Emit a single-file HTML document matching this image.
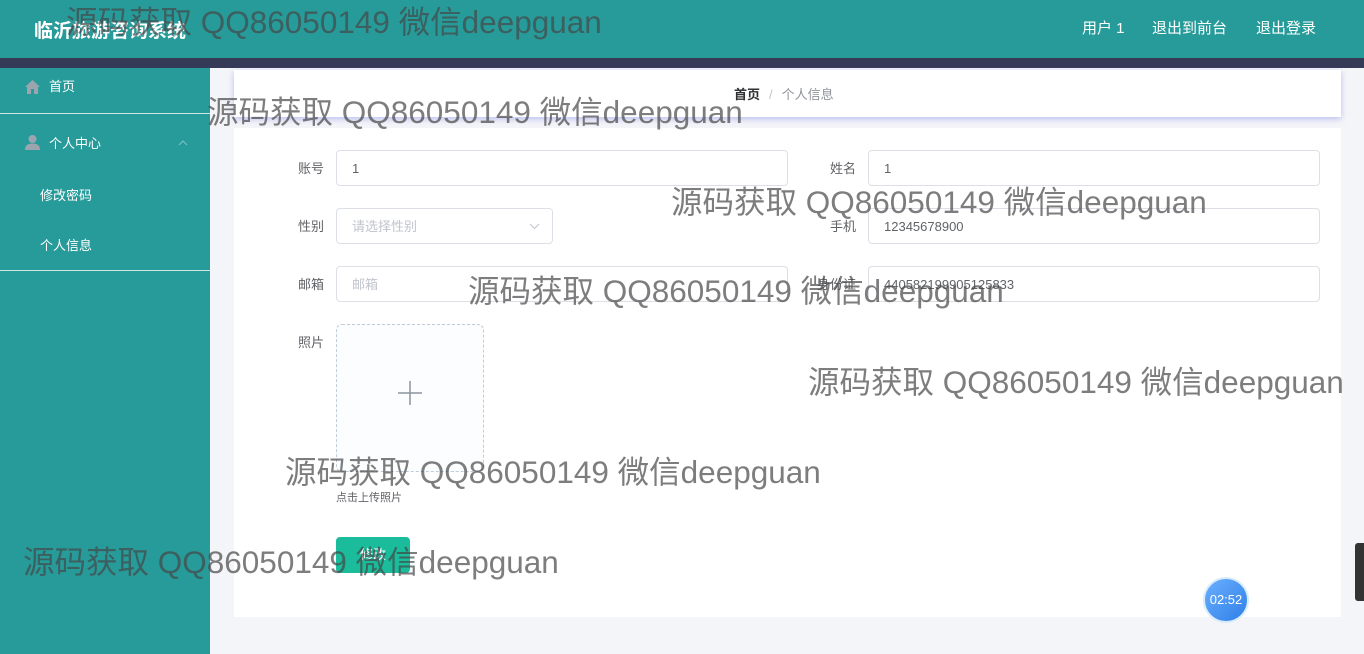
<!DOCTYPE html>
<html><head><meta charset="utf-8"><style>
*{margin:0;padding:0;box-sizing:border-box}
body{width:1364px;height:654px;overflow:hidden;background:#f4f5f8;font-family:"Liberation Sans","Microsoft YaHei","Noto Sans CJK SC",sans-serif;position:relative;font-size:13px;color:#606266}
.hdr{position:absolute;left:0;top:0;width:1364px;height:58px;background:#279b9a}
.strip{position:absolute;left:0;top:58px;width:1364px;height:10px;background:#353a57}
.logo{position:absolute;left:34px;top:16px;color:#fff;font-size:19px;font-weight:bold}
.nav{position:absolute;top:17px;color:#fff;font-size:15px}
.side{position:absolute;left:0;top:68px;width:210px;height:586px;background:#279b9a;color:#fff}
.side .it{position:absolute;font-size:13px}
.line{position:absolute;left:0;width:210px;height:1px;background:#cfe6e6}
.bc{position:absolute;left:234px;top:70px;width:1107px;height:47px;background:#fff;box-shadow:0 2px 6px rgba(80,90,230,.35)}
.card{position:absolute;left:234px;top:128px;width:1107px;height:489px;background:#fff}
.lbl{position:absolute;font-size:13px;color:#606266;text-align:right;width:60px}
.inp{position:absolute;height:36px;border:1px solid #dcdfe6;border-radius:4px;background:#fff;padding-left:15px;line-height:35px;font-size:13px;color:#606266}
.ph{color:#c0c4cc}
.wm{position:absolute;font-size:31.5px;color:rgba(70,70,70,.7);white-space:nowrap;line-height:34px;font-family:"Liberation Sans","Noto Sans CJK SC",sans-serif}
</style></head><body>
<div class="hdr"></div><div class="strip"></div>
<div class="logo">临沂旅游咨询系统</div>
<div class="nav" style="left:1082px">用户 1</div>
<div class="nav" style="left:1152px">退出到前台</div>
<div class="nav" style="left:1256px">退出登录</div>
<div class="side">
 <svg style="position:absolute;left:25px;top:12px" width="15" height="14" viewBox="0 0 15 14"><path d="M7.5 0L0 7h2v7h4V9h3v5h4V7h2z" fill="#9aa5b0"/></svg>
 <div class="it" style="left:49px;top:8px">首页</div>
 <div class="line" style="top:45px"></div>
 <svg style="position:absolute;left:25px;top:67px" width="15" height="15" viewBox="0 0 15 15"><circle cx="7.5" cy="4" r="4" fill="#9aa5b0"/><path d="M0 15c0-5 3-6.5 7.5-6.5S15 10 15 15z" fill="#9aa5b0"/></svg>
 <div class="it" style="left:49px;top:65px">个人中心</div>
 <svg style="position:absolute;left:178px;top:72px" width="10" height="6"><path d="M1 5l4-4 4 4" stroke="#7fc3c3" fill="none"/></svg>
 <div class="it" style="left:40px;top:117px">修改密码</div>
 <div class="it" style="left:40px;top:167px">个人信息</div>
 <div class="line" style="top:202px"></div>
</div>
<div class="bc"><div style="position:absolute;left:500px;top:14px;font-size:13px"><b style="color:#303133">首页</b><span style="color:#c0c4cc;margin:0 9px">/</span><span style="color:#909399">个人信息</span></div></div>
<div class="card"></div>
<div class="lbl" style="left:264px;top:158px">账号</div>
<div class="inp" style="left:336px;top:150px;width:452px">1</div>
<div class="lbl" style="left:796px;top:158px">姓名</div>
<div class="inp" style="left:868px;top:150px;width:452px">1</div>
<div class="lbl" style="left:264px;top:216px">性别</div>
<div class="inp ph" style="left:336px;top:208px;width:217px">请选择性别<svg style="position:absolute;right:12px;top:14px" width="11" height="7"><path d="M1 1l4.5 4.5L10 1" stroke="#c0c4cc" fill="none"/></svg></div>
<div class="lbl" style="left:796px;top:216px">手机</div>
<div class="inp" style="left:868px;top:208px;width:452px">12345678900</div>
<div class="lbl" style="left:264px;top:274px">邮箱</div>
<div class="inp ph" style="left:336px;top:266px;width:452px">邮箱</div>
<div class="lbl" style="left:796px;top:274px">身份证</div>
<div class="inp" style="left:868px;top:266px;width:452px">440582199905125833</div>
<div class="lbl" style="left:264px;top:332px">照片</div>
<div style="position:absolute;left:336px;top:324px;width:148px;height:148px;border:1px dashed #c0ccda;border-radius:6px;background:#fbfdff"></div>
<svg style="position:absolute;left:398px;top:381px" width="24" height="24"><path d="M12 0v24M0 12h24" stroke="#8c939d" stroke-width="1.5"/></svg>
<div style="position:absolute;left:336px;top:489px;font-size:11px;color:#606266">点击上传照片</div>
<div style="position:absolute;left:336px;top:537px;width:74px;height:36px;background:#1abc9c;border-radius:4px;color:#fff;font-size:13px;line-height:36px;text-align:center">修改</div>
<div style="position:absolute;left:1203px;top:577px;width:46px;height:46px;border-radius:50%;background:linear-gradient(135deg,#6ab0ff,#2f7fe8);border:2px solid #d8ecfb;color:#fff;font-size:13px;line-height:42px;text-align:center">02:52</div>
<div style="position:absolute;left:1355px;top:543px;width:12px;height:58px;background:#333;border-radius:3px"></div>
<div class="wm" style="left:66px;top:5px">源码获取 QQ86050149 微信deepguan</div>
<div class="wm" style="left:207px;top:95px">源码获取 QQ86050149 微信deepguan</div>
<div class="wm" style="left:671px;top:185px">源码获取 QQ86050149 微信deepguan</div>
<div class="wm" style="left:468px;top:274px">源码获取 QQ86050149 微信deepguan</div>
<div class="wm" style="left:808px;top:365px">源码获取 QQ86050149 微信deepguan</div>
<div class="wm" style="left:285px;top:455px">源码获取 QQ86050149 微信deepguan</div>
<div class="wm" style="left:23px;top:545px">源码获取 QQ86050149 微信deepguan</div>
</body></html>
